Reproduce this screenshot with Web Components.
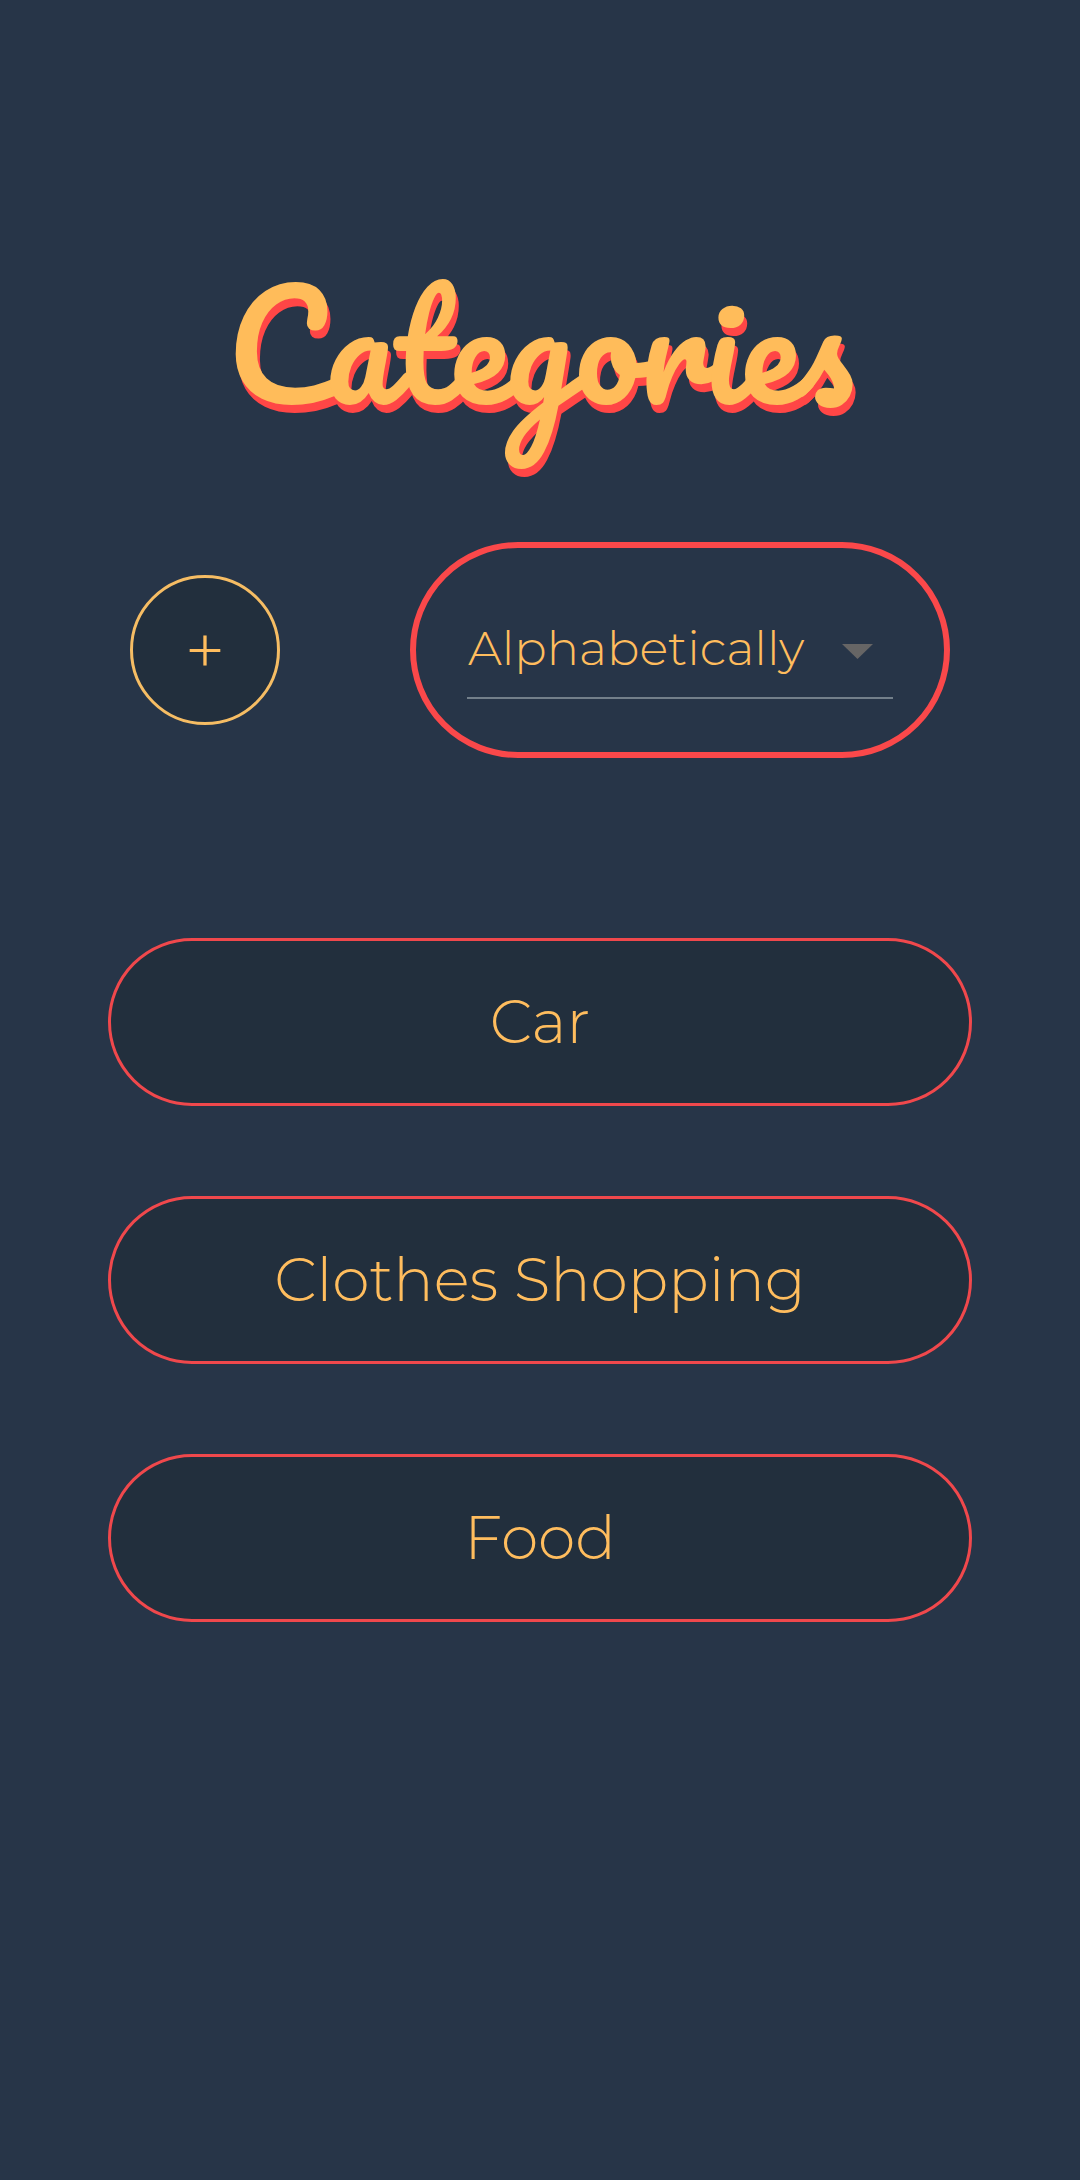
<!DOCTYPE html>
<html lang="en">
<head>
<meta charset="utf-8">
<title>Categories</title>
<style>
html,body{margin:0;background:#273548}
body{font-family:Montserrat,Inter,sans-serif;font-weight:300;color:#ffbd5e}
</style>
</head>
<body>
<category-page>
  <page-title slot="title">Categories</page-title>
  <round-button slot="tools">+</round-button>
  <sort-select slot="tools">Alphabetically</sort-select>
  <category-card>Car</category-card>
  <category-card>Clothes Shopping</category-card>
  <category-card>Food</category-card>
</category-page>
<script>
const define = (name, html) => customElements.define(name, class extends HTMLElement {
  constructor() {
    super();
    this.attachShadow({ mode: 'open' }).innerHTML = html;
  }
});

define('category-page', `<style>
:host{display:flex;flex-direction:column;box-sizing:border-box;width:1080px;height:2180px;padding-top:242px;overflow:hidden;background:#273548}
header{display:flex;justify-content:center;height:300px}
nav{display:flex;align-items:center;justify-content:space-between;height:216px;padding:0 130px}
main{display:flex;flex-direction:column;gap:90px;padding:180px 108px 0}
</style><header><slot name="title"></slot></header><nav><slot name="tools"></slot></nav><main><slot></slot></main>`);

define('page-title', `<style>
:host{display:block}
h1{margin:0;font:400 144px/202px Pacifico,Lato,cursive;white-space:nowrap;color:#ffbc5a;text-shadow:3px 8px 0 #ff4646}
</style><h1><slot></slot></h1>`);

define('round-button', `<style>
:host{display:block}
button{display:flex;align-items:center;justify-content:center;box-sizing:border-box;width:150px;height:150px;padding:0;border:3px solid #f6bd64;border-radius:50%;background:#222f3d;color:inherit;font:inherit;font-size:72px;line-height:72px}
</style><button><slot></slot></button>`);

define('sort-select', `<style>
:host{display:flex;box-sizing:border-box;width:540px;height:216px;border:6px solid #fa484a;border-radius:108px;padding:62px 51px 53px;flex:none}
.field{display:flex;flex:1;align-items:center;justify-content:space-between;box-sizing:border-box;border-bottom:2px solid #737f8a;padding:0 20px 6px 1px}
span{font-size:48px;line-height:60px;white-space:nowrap;padding-bottom:6px}
svg{display:block;margin-top:2px}
</style><div class="field"><span><slot></slot></span><svg width="31" height="15" viewBox="0 0 30 15" preserveAspectRatio="none"><path d="M0 0H30L15 15Z" fill="#666565"/></svg></div>`);

define('category-card', `<style>
:host{display:flex;align-items:center;justify-content:center;box-sizing:border-box;height:168px;border:3px solid #f0484c;border-radius:84px;background:#222f3d;font-size:60px;line-height:72px}
</style><span><slot></slot></span>`);
</script>
</body>
</html>
